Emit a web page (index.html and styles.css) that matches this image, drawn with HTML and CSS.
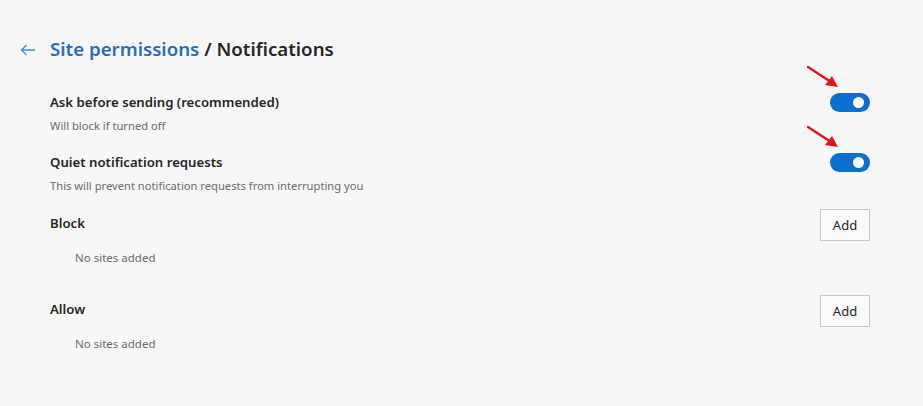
FILE: index.html
```html
<!DOCTYPE html>
<html lang="en">
<head>
    <meta charset="UTF-8">
    <title>Notifications</title>
    <link rel="stylesheet" href="styles.css">
</head>
<body>
    <div class="page">
        <div class="header">
            <span class="back">
                <svg width="16" height="12" viewBox="0 0 16 12">
                    <path d="M15 6H1.5M6.5 1L1.5 6l5 5" fill="none" stroke="#3c8dd3" stroke-width="1.3"/>
                </svg>
            </span>
            <h1><span class="crumb">Site permissions</span> / Notifications</h1>
        </div>

        <div class="setting">
            <div class="setting-text">
                <div class="label">Ask before sending (recommended)</div>
                <div class="desc">Will block if turned off</div>
            </div>
            <div class="toggle-wrap">
                <svg class="pointer" width="34" height="24" viewBox="0 0 34 24">
                    <line x1="1" y1="1" x2="24" y2="16" stroke="#e0141b" stroke-width="2.4" stroke-linecap="round"/>
                    <polygon points="31,21 18,19 25,10" fill="#e0141b"/>
                </svg>
                <span class="toggle"><span class="knob"></span></span>
            </div>
        </div>

        <div class="setting">
            <div class="setting-text">
                <div class="label">Quiet notification requests</div>
                <div class="desc">This will prevent notification requests from interrupting you</div>
            </div>
            <div class="toggle-wrap">
                <svg class="pointer" width="34" height="24" viewBox="0 0 34 24">
                    <line x1="1" y1="1" x2="24" y2="16" stroke="#e0141b" stroke-width="2.4" stroke-linecap="round"/>
                    <polygon points="31,21 18,19 25,10" fill="#e0141b"/>
                </svg>
                <span class="toggle"><span class="knob"></span></span>
            </div>
        </div>

        <div class="list first">
            <div class="list-head">
                <div class="label">Block</div>
                <button class="add">Add</button>
            </div>
            <div class="empty">No sites added</div>
        </div>

        <div class="list">
            <div class="list-head">
                <div class="label">Allow</div>
                <button class="add">Add</button>
            </div>
            <div class="empty">No sites added</div>
        </div>
    </div>
</body>
</html>
```

FILE: styles.css
```css
body {
    margin: 0;
    background-color: #f7f7f7;
    font-family: "Noto Sans", "Open Sans", sans-serif;
    color: #262626;
}
.page {
    padding: 35px 53px 0 50px;
}
.header {
    display: flex;
    align-items: center;
    margin-left: -30px;
    height: 28px;
}
.back {
    display: flex;
    width: 30px;
    padding-top: 1px;
}
h1 {
    margin: 0;
    font-size: 18.7px;
    font-weight: 600;
    line-height: 28px;
}
.crumb {
    color: #2a6fb3;
}
.setting {
    display: flex;
    justify-content: space-between;
    margin-top: 29px;
}
.setting + .setting {
    margin-top: 18px;
}
.label {
    font-size: 13.2px;
    font-weight: 600;
    line-height: 20px;
}
.desc {
    margin-top: 6px;
    font-size: 11.2px;
    line-height: 16px;
    color: #6b6b6b;
}
.toggle-wrap {
    position: relative;
    padding-top: 1px;
}
.pointer {
    position: absolute;
    left: -23px;
    top: -26px;
}
.toggle {
    display: block;
    position: relative;
    width: 40px;
    height: 19px;
    border-radius: 10px;
    background-color: #0a6fcf;
}
.knob {
    position: absolute;
    right: 6px;
    top: 4px;
    width: 11px;
    height: 11px;
    border-radius: 50%;
    background-color: #fff;
}
.list.first {
    margin-top: 15px;
}
.list {
    margin-top: 29px;
}
.list-head {
    display: flex;
    justify-content: space-between;
    align-items: center;
}
.list-head .label {
    margin-top: -4px;
}
.add {
    width: 50px;
    height: 32px;
    padding: 0;
    border: 1px solid #c6c6c6;
    border-radius: 0;
    background-color: #fbfbfb;
    font-family: inherit;
    font-size: 13px;
    color: #262626;
}
.empty {
    margin-top: 9px;
    padding-left: 25px;
    font-size: 11.5px;
    line-height: 16px;
    color: #6b6b6b;
}
```
